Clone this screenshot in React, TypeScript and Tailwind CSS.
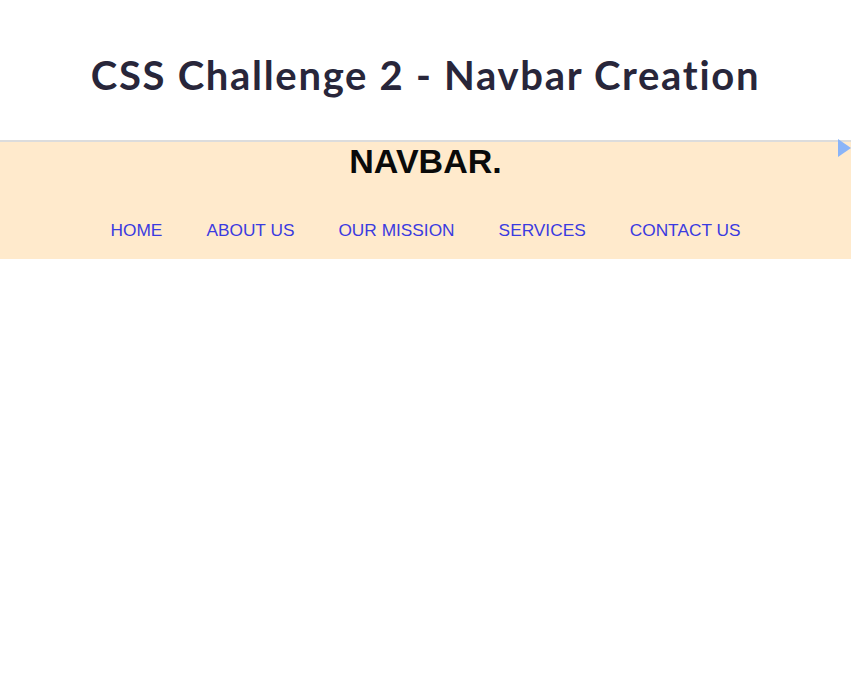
import React from 'react';

const links = ['HOME', 'ABOUT US', 'OUR MISSION', 'SERVICES', 'CONTACT US'];

export default function App() {
  return (
    <div className="min-h-screen w-full bg-white">
      {/* page title */}
      <div className="h-[140px] flex items-center justify-center pt-[9px]">
        <h1 className="text-[40px] font-bold text-[#28263a] tracking-[1.7px] font-['Lato','Open_Sans',sans-serif]">
          CSS Challenge 2 - Navbar Creation
        </h1>
      </div>

      {/* navbar preview */}
      <div className="relative border-t-2 border-[#dcdcdc] bg-[#ffeacc] h-[119px] font-['Liberation_Sans',Arial,sans-serif]">
        <div className="text-center text-[34px] font-bold leading-none pt-[2px] text-[#0a0a0a]">NAVBAR.</div>
        <nav className="flex justify-center gap-[44px] mt-[44px]">
          {links.map((l) => (
            <a key={l} href="#" className="text-[17.3px] leading-none text-[#3b3be0]">
              {l}
            </a>
          ))}
        </nav>
        <svg className="absolute right-0 -top-[3px]" width="13" height="18" viewBox="0 0 13 18">
          <path d="M0 0 L13 9 L0 18 Z" fill="#8ab4f8" />
        </svg>
      </div>
    </div>
  );
}
